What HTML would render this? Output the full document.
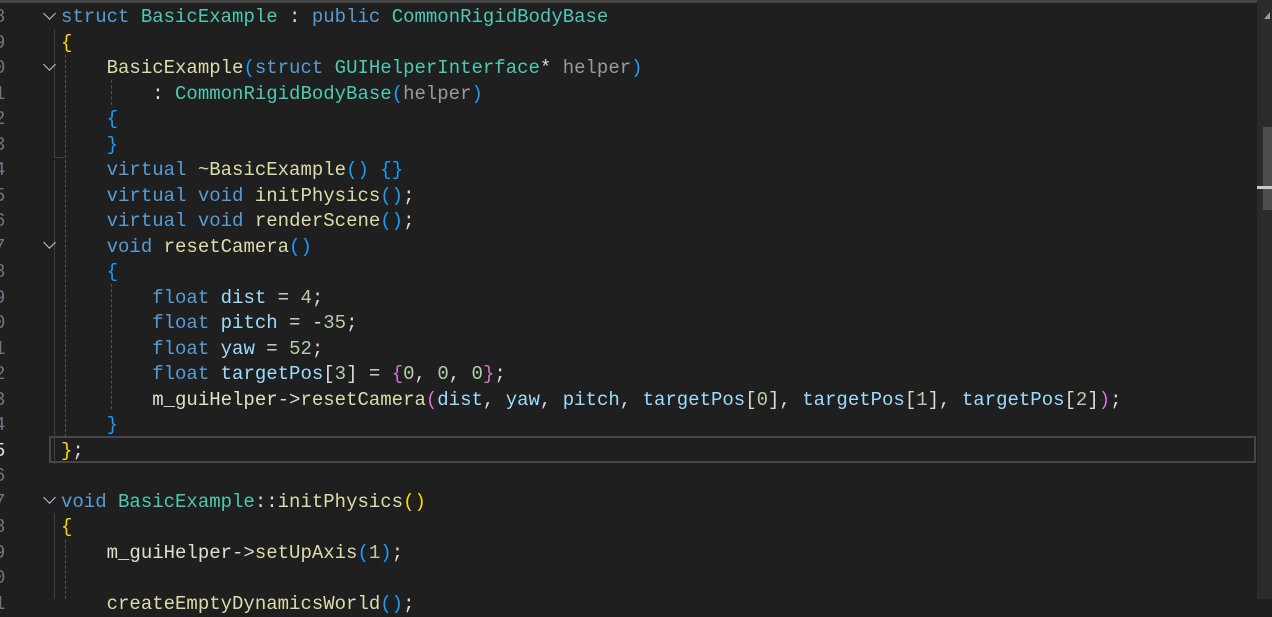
<!DOCTYPE html>
<html><head><meta charset="utf-8"><style>
html,body{margin:0;padding:0;width:1272px;height:599px;overflow:hidden;background:#1f1f1f;}
.top{position:absolute;left:0;top:0;width:1257px;height:3px;background:#454545;}
.code{position:absolute;left:61px;top:5px;font-family:"Liberation Mono",monospace;font-size:19px;line-height:25.5px;color:#dadada;white-space:pre;}
.ln{position:absolute;left:-6px;top:5px;font-family:"Liberation Mono",monospace;font-size:19px;line-height:25.5px;color:#6e7681;white-space:pre;}
.k{color:#569cd6}.t{color:#4ec9b0}.f{color:#dcdcaa}.v{color:#9cdcfe}.n{color:#b5cea8}
.y{color:#ffd700}.p{color:#da70d6}.b{color:#179fff}.g{color:#9a9a9a}.m{color:#e2dfc8}
.cur{position:absolute;left:49px;top:436px;width:1203px;height:23px;border:2px solid #464646;}
.chev{position:absolute;left:45px;width:8px;height:8px;border-right:1.5px solid #c5c5c5;border-bottom:1.5px solid #c5c5c5;transform:rotate(45deg);}
.vl{position:absolute;width:0;}
.sb{position:absolute;left:1257px;top:0;width:15px;height:599px;background:#2b2b2b;}
</style></head><body>
<div class="top"></div>
<div class="cur"></div>
<div class="vl" style="left:54px;top:29px;height:128px;border-left:1px solid #404040"></div>
<div class="vl" style="left:54px;top:157px;height:1px;width:10px;border-top:1px solid #404040"></div>
<div class="vl" style="left:54px;top:160px;height:304px;border-left:1px solid #404040"></div>
<div class="vl" style="left:65px;top:55px;height:382px;border-left:1px dashed #555"></div>
<div class="vl" style="left:111px;top:80px;height:25px;border-left:1px dashed #555"></div>
<div class="vl" style="left:111px;top:284px;height:125px;border-left:1px dashed #555"></div>
<div class="vl" style="left:54px;top:513px;height:86px;border-left:1px solid #404040"></div>
<div class="vl" style="left:65px;top:540px;height:59px;border-left:1px dashed #555"></div>
<div class="chev" style="top:9px"></div>
<div class="chev" style="top:60px"></div>
<div class="chev" style="top:238px"></div>
<div class="chev" style="top:493px"></div>
<div class="ln">8
9
0
1
2
3
4
5
6
7
8
9
0
1
2
3
4
<span style="color:#e0e0e0">5</span>
6
7
8
9
0
1</div>
<div class="code"><span class="k">struct</span> <span class="t">BasicExample</span> : <span class="k">public</span> <span class="t">CommonRigidBodyBase</span>
<span class="y">{</span>
    <span class="f">BasicExample</span><span class="b">(</span><span class="k">struct</span> <span class="t">GUIHelperInterface</span>* <span class="g">helper</span><span class="b">)</span>
        : <span class="t">CommonRigidBodyBase</span><span class="b">(</span><span class="g">helper</span><span class="b">)</span>
    <span class="b">{</span>
    <span class="b">}</span>
    <span class="k">virtual</span> <span class="f">~BasicExample</span><span class="b">()</span> <span class="b">{}</span>
    <span class="k">virtual</span> <span class="k">void</span> <span class="f">initPhysics</span><span class="b">()</span>;
    <span class="k">virtual</span> <span class="k">void</span> <span class="f">renderScene</span><span class="b">()</span>;
    <span class="k">void</span> <span class="f">resetCamera</span><span class="b">()</span>
    <span class="b">{</span>
        <span class="k">float</span> <span class="v">dist</span> = <span class="n">4</span>;
        <span class="k">float</span> <span class="v">pitch</span> = -<span class="n">35</span>;
        <span class="k">float</span> <span class="v">yaw</span> = <span class="n">52</span>;
        <span class="k">float</span> <span class="v">targetPos</span>[<span class="n">3</span>] = <span class="p">{</span><span class="n">0</span>, <span class="n">0</span>, <span class="n">0</span><span class="p">}</span>;
        <span class="m">m_guiHelper</span>-&gt;<span class="f">resetCamera</span><span class="p">(</span><span class="v">dist</span>, <span class="v">yaw</span>, <span class="v">pitch</span>, <span class="v">targetPos</span>[<span class="n">0</span>], <span class="v">targetPos</span>[<span class="n">1</span>], <span class="v">targetPos</span>[<span class="n">2</span>]<span class="p">)</span>;
    <span class="b">}</span>
<span class="y">}</span>;

<span class="k">void</span> <span class="t">BasicExample</span>::<span class="f">initPhysics</span><span class="y">()</span>
<span class="y">{</span>
    <span class="m">m_guiHelper</span>-&gt;<span class="f">setUpAxis</span><span class="b">(</span><span class="n">1</span><span class="b">)</span>;

    <span class="f">createEmptyDynamicsWorld</span><span class="b">()</span>;</div>
<div class="sb">
<div style="position:absolute;left:7px;top:12px;width:0;height:0;border-left:6px solid transparent;border-bottom:7px solid #9a9a9a"></div>
<div style="position:absolute;left:6px;top:127px;width:9px;height:83px;background:#4e4e4e"></div>
<div style="position:absolute;left:0;top:186px;width:15px;height:3px;background:#c8c8c8"></div>
</div>
</body></html>
